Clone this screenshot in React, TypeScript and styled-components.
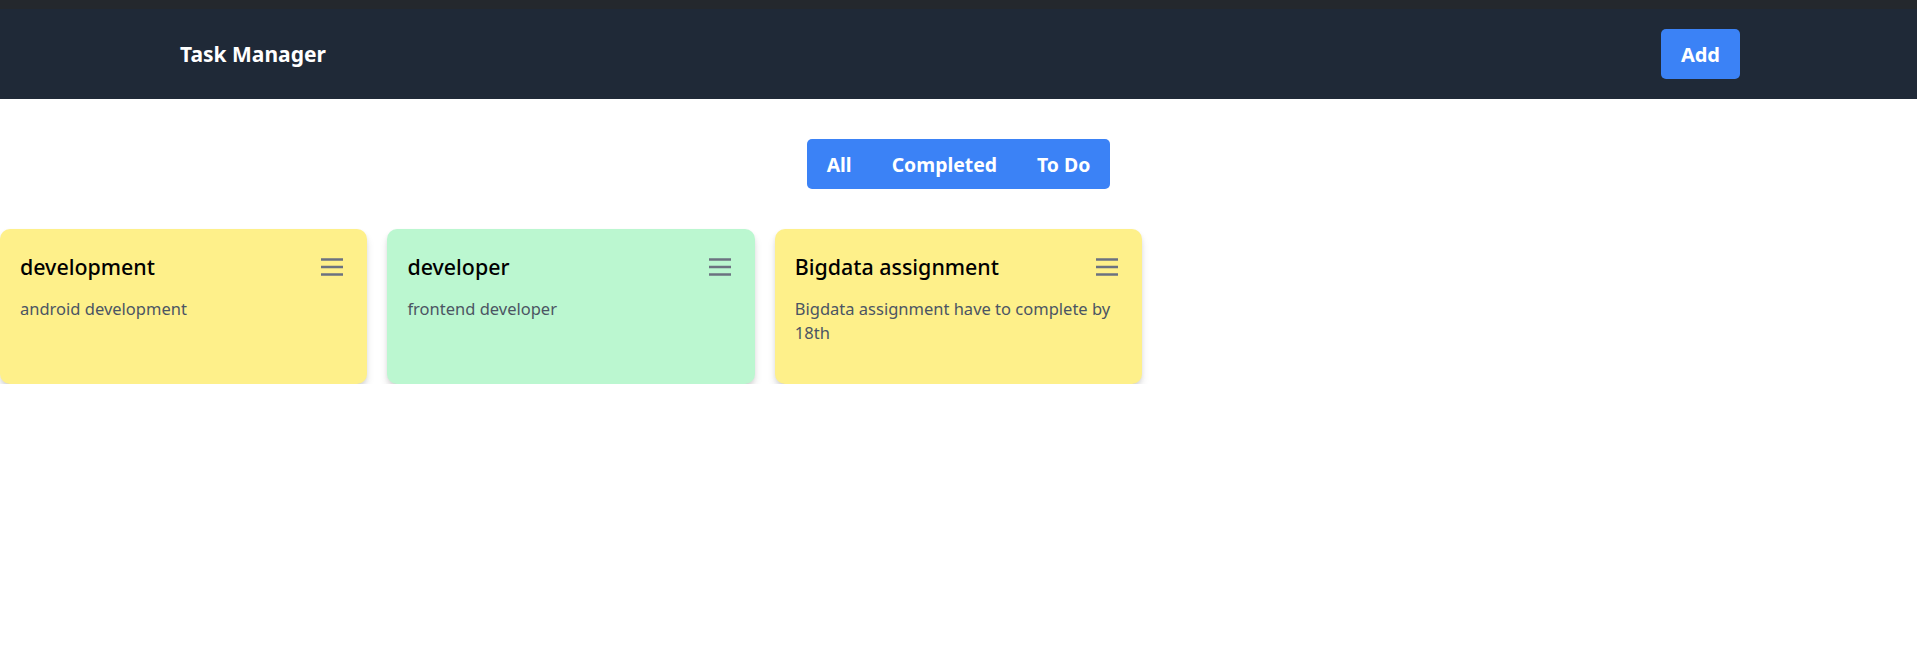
import React from "react";
import styled, { createGlobalStyle } from "styled-components";

const GlobalStyle = createGlobalStyle`
  html, body { margin: 0; padding: 0; background: #ffffff; }
  body { font-family: "Noto Sans", "Open Sans", Arial, sans-serif; }
  * { box-sizing: border-box; }
`;

const TopStrip = styled.div`
  height: 9px;
  background: #24282d;
`;

const Header = styled.header`
  height: 90px;
  background: #1f2937;
  display: flex;
  align-items: center;
  justify-content: space-between;
  padding: 0 177px 0 180px;
`;

const Brand = styled.h1`
  margin: 0;
  color: #ffffff;
  font-size: 21px;
  font-weight: 700;
`;

const AddButton = styled.button`
  height: 50px;
  padding: 0 20px;
  border: none;
  border-radius: 5px;
  background: #3b82f6;
  color: #ffffff;
  font-family: inherit;
  font-size: 20px;
  font-weight: 700;
  cursor: pointer;
`;

const FilterRow = styled.div`
  display: flex;
  justify-content: center;
  margin-top: 40px;
`;

const FilterGroup = styled.div`
  display: inline-flex;
  height: 50px;
  background: #3b82f6;
  border-radius: 5px;
  overflow: hidden;
`;

const FilterButton = styled.button`
  height: 100%;
  padding: 0 20px;
  border: none;
  background: transparent;
  color: #ffffff;
  font-family: inherit;
  font-size: 19.4px;
  font-weight: 700;
  cursor: pointer;
`;

const CardGrid = styled.div`
  display: grid;
  grid-template-columns: repeat(5, 1fr);
  gap: 20px;
  margin-top: 40px;
`;

const Card = styled.div<{ $bg: string }>`
  background: ${(p) => p.$bg};
  border-radius: 10px;
  height: 155px;
  padding: 20px;
  box-shadow: 0 6px 9px -1px rgba(0, 0, 0, 0.15), 0 2px 5px -1px rgba(0, 0, 0, 0.09);
`;

const CardHead = styled.div`
  display: flex;
  align-items: center;
  justify-content: space-between;
  height: 35px;
`;

const CardTitle = styled.h2`
  margin: 0;
  font-size: 21.4px;
  font-weight: 500;
  color: #000000;
`;

const MenuButton = styled.button`
  display: flex;
  align-items: center;
  justify-content: center;
  width: 28px;
  height: 28px;
  padding: 0;
  border: none;
  background: transparent;
  color: #6b7280;
  cursor: pointer;
`;

const CardText = styled.p`
  margin: 13px 0 0;
  font-size: 16.5px;
  line-height: 24px;
  color: #4b5563;
`;

const MenuIcon = () => (
  <svg width="28" height="28" viewBox="0 0 28 28" fill="none" stroke="currentColor" strokeWidth="2.5" strokeLinecap="butt">
    <line x1="2" y1="6.5" x2="24" y2="6.5" />
    <line x1="2" y1="14" x2="24" y2="14" />
    <line x1="2" y1="21.5" x2="24" y2="21.5" />
  </svg>
);

const tasks = [
  { title: "development", desc: "android development", bg: "#fef08a" },
  { title: "developer", desc: "frontend developer", bg: "#bbf7d0" },
  { title: "Bigdata assignment", desc: "Bigdata assignment have to complete by 18th", bg: "#fef08a" },
];

export default function App() {
  return (
    <>
      <GlobalStyle />
      <TopStrip />
      <Header>
        <Brand>Task Manager</Brand>
        <AddButton>Add</AddButton>
      </Header>
      <FilterRow>
        <FilterGroup>
          <FilterButton>All</FilterButton>
          <FilterButton>Completed</FilterButton>
          <FilterButton>To Do</FilterButton>
        </FilterGroup>
      </FilterRow>
      <CardGrid>
        {tasks.map((t) => (
          <Card key={t.title} $bg={t.bg}>
            <CardHead>
              <CardTitle>{t.title}</CardTitle>
              <MenuButton aria-label="menu">
                <MenuIcon />
              </MenuButton>
            </CardHead>
            <CardText>{t.desc}</CardText>
          </Card>
        ))}
      </CardGrid>
    </>
  );
}
